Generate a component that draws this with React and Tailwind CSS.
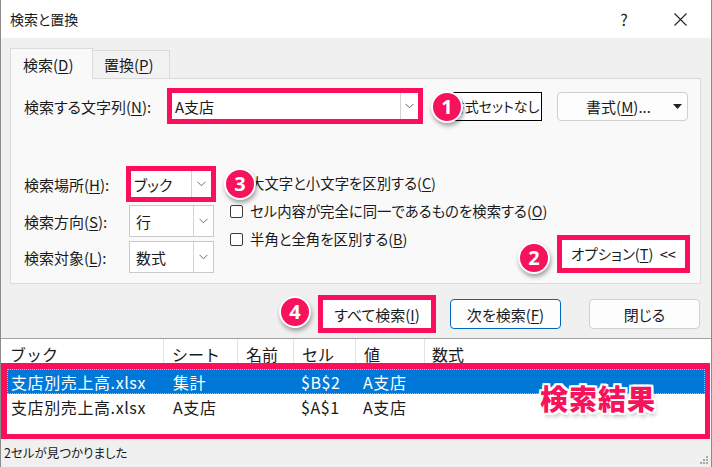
import React from 'react';

const PINK = 'border-[#fb0f5b]';

function Chevron() {
  return (
    <svg width="9" height="6" viewBox="0 0 9 6" fill="none">
      <path d="M0.5 0.8 L4.5 4.8 L8.5 0.8" stroke="#6b6b6b" strokeWidth="1" />
    </svg>
  );
}

function Badge({ n, className }) {
  return (
    <div
      className={`absolute w-[32px] h-[32px] rounded-full bg-[#f7135c] border-2 border-white shadow-[1px_3px_4px_rgba(0,0,0,0.35)] flex items-center justify-center text-white text-[20px] font-bold leading-none font-['Noto_Sans',sans-serif] ${className}`}
    >
      {n}
    </div>
  );
}

function Key({ children }) {
  return <span className="underline underline-offset-2">{children}</span>;
}

function Select({ value }) {
  return (
    <div className="ml-[3px] w-[85px] h-[32px] bg-white border border-[#c9c9c9] flex items-center">
      <span className="flex-1 pl-[6px] text-[15px]">{value}</span>
      <div className="w-[20px] h-full border-l border-[#d4d4d4] flex items-center justify-center">
        <Chevron />
      </div>
    </div>
  );
}

function Checkbox({ children }) {
  return (
    <div className="h-[28px] flex items-center whitespace-nowrap">
      <div className="w-[13px] h-[13px] shrink-0 rounded-[2px] border border-[#3b3b3b] bg-white" />
      <span className="ml-[7px] text-[14.4px]">{children}</span>
    </div>
  );
}

const cols = [163, 74, 56, 62, 69];

export default function App() {
  return (
    <div className="relative w-[712px] h-[467px] overflow-hidden bg-[#f0f0f0] flex flex-col text-[#1a1a1a] leading-none font-['Noto_Sans_CJK_JP',sans-serif] [font-feature-settings:'palt'] border-l border-r border-[#8c8c8c]">
      {/* title bar */}
      <div className="h-[38px] bg-white flex items-center shrink-0">
        <span className="pl-[9px] text-[14px]">検索と置換</span>
        <div className="flex-1" />
        <span className="w-[20px] text-center text-[16px]">?</span>
        <svg className="ml-[40px] mr-[24px]" width="13" height="13" viewBox="0 0 13 13">
          <path d="M0.5 0.5 L12.5 12.5 M12.5 0.5 L0.5 12.5" stroke="#222" strokeWidth="1.1" />
        </svg>
      </div>

      {/* tabs */}
      <div className="pt-[10px] pl-[9px] flex items-end shrink-0">
        <div className="relative z-10 -mb-px w-[83px] h-[31px] bg-[#f9f9f9] border border-b-0 border-[#dadada] flex items-center pl-[12px] text-[15px]">
          検索(<Key>D</Key>)
        </div>
        <div className="w-[77px] h-[28px] bg-[#f2f2f2] border border-l-0 border-b-0 border-[#dadada] flex items-center pl-[11px] text-[15px]">
          置換(<Key>P</Key>)
        </div>
      </div>

      {/* panel */}
      <div className="ml-[9px] w-[691px] h-[206px] bg-[#f9f9f9] border border-[#dadada] shrink-0 flex flex-col">
        <div className="mt-[9px] h-[36px] flex items-center">
          <span className="w-[156px] pl-[13px] text-[15px]">
            検索する文字列(<Key>N</Key>):
          </span>
          <div className={`w-[256px] h-[36px] border-[5px] ${PINK} bg-white flex items-center`}>
            <span className="flex-1 pl-[3px] text-[15px]">A支店</span>
            <div className="w-[18px] h-full border-l border-[#d4d4d4] flex items-center justify-center">
              <Chevron />
            </div>
          </div>
          <div className="ml-[25px] w-[94px] h-[29px] bg-white border border-black flex items-center justify-center text-[14px] whitespace-nowrap">
            書式セットなし
          </div>
          <div className="ml-[15px] w-[131px] h-[29px] rounded-[4px] bg-[#fdfdfd] border border-[#cfcfcf] flex items-center text-[15px]">
            <span className="flex-1 text-center pl-[6px]">
              書式(<Key>M</Key>)...
            </span>
            <svg className="mr-[5px]" width="9" height="5" viewBox="0 0 9 5">
              <path d="M0 0 L9 0 L4.5 5 Z" fill="#222" />
            </svg>
          </div>
        </div>

        <div className="mt-[42px] flex">
          <div className="flex flex-col shrink-0">
            <div className="h-[36px] flex items-center">
              <span className="w-[115px] pl-[13px] text-[15px]">
                検索場所(<Key>H</Key>):
              </span>
              <div className={`w-[90px] h-[36px] border-[5px] ${PINK} bg-white flex items-center`}>
                <span className="flex-1 pl-[3px] text-[15px]">ブック</span>
                <div className="w-[20px] h-full border-l border-[#d4d4d4] flex items-center justify-center">
                  <Chevron />
                </div>
              </div>
            </div>
            <div className="mt-[3px] h-[32px] flex items-center">
              <span className="w-[115px] pl-[13px] text-[15px]">
                検索方向(<Key>S</Key>):
              </span>
              <Select value="行" />
            </div>
            <div className="mt-[4px] h-[32px] flex items-center">
              <span className="w-[115px] pl-[13px] text-[15px]">
                検索対象(<Key>L</Key>):
              </span>
              <Select value="数式" />
            </div>
          </div>

          <div className="ml-[14px] pt-[3px] flex flex-col shrink-0">
            <Checkbox>
              大文字と小文字を区別する(<Key>C</Key>)
            </Checkbox>
            <Checkbox>
              セル内容が完全に同一であるものを検索する(<Key>O</Key>)
            </Checkbox>
            <Checkbox>
              半角と全角を区別する(<Key>B</Key>)
            </Checkbox>
          </div>

          <div className="flex-1" />
          <div className={`self-end shrink-0 mr-[10px] w-[133px] h-[38px] border-[5px] ${PINK} bg-white flex items-center justify-center text-[14.5px] whitespace-nowrap`}>
            オプション(<Key>T</Key>)&nbsp;&nbsp;&lt;&lt;
          </div>
        </div>
      </div>

      {/* action buttons */}
      <div className="mt-[11px] h-[38px] flex items-center shrink-0">
        <div className={`ml-[317px] w-[118px] h-[38px] border-[5px] ${PINK} bg-white flex items-center justify-center text-[15px]`}>
          すべて検索(<Key>I</Key>)
        </div>
        <div className="ml-[14px] w-[111px] h-[30px] rounded-[4px] bg-[#fdfdfd] border border-[#0067c0] flex items-center justify-center text-[15px]">
          次を検索(<Key>F</Key>)
        </div>
        <div className="ml-[28px] w-[111px] h-[30px] rounded-[4px] bg-[#fdfdfd] border border-[#d0d0d0] flex items-center justify-center text-[15px]">
          閉じる
        </div>
      </div>

      {/* results list */}
      <div className="mt-[5px] bg-white border-t border-[#a0a0a0] flex flex-col shrink-0 [font-feature-settings:normal] text-[16px]">
        <div className="h-[24px] flex items-center">
          {['ブック', 'シート', '名前', 'セル', '値'].map((h, i) => (
            <div
              key={h}
              style={{ width: cols[i] }}
              className={`h-full flex items-center pt-[5px] border-r border-[#e3e3e3] ${i === 0 ? 'pl-[9px]' : 'pl-[8px]'}`}
            >
              {h}
            </div>
          ))}
          <div className="h-full flex items-center pt-[5px] pl-[7px]">数式</div>
        </div>
        <div className={`w-[709px] h-[76px] border-[6px] border-b-[5px] border-r-[5px] ${PINK} flex flex-col tracking-[0.6px]`}>
          <div className="h-[25px] bg-[#0078d7] text-white flex items-center border border-dotted border-[#f0b65a]">
            <div style={{ width: cols[0] - 7 }} className="pl-[3px]">支店別売上高.xlsx</div>
            <div style={{ width: cols[1] }} className="pl-[9px]">集計</div>
            <div style={{ width: cols[2] }} />
            <div style={{ width: cols[3] }} className="pl-[7px]">$B$2</div>
            <div className="pl-[7px]">A支店</div>
          </div>
          <div className="h-[25px] flex items-center">
            <div style={{ width: cols[0] - 6 }} className="pl-[4px]">支店別売上高.xlsx</div>
            <div style={{ width: cols[1] }} className="pl-[9px]">A支店</div>
            <div style={{ width: cols[2] }} />
            <div style={{ width: cols[3] }} className="pl-[7px]">$A$1</div>
            <div className="pl-[7px]">A支店</div>
          </div>
        </div>
      </div>

      {/* status bar */}
      <div className="flex-1 flex items-center pl-[3px] text-[12.5px] relative">
        2セルが見つかりました
        <svg className="absolute right-[2px] bottom-[2px]" width="10" height="10" viewBox="0 0 10 10">
          {[[8, 2], [8, 5], [8, 8], [5, 5], [5, 8], [2, 8]].map(([x, y]) => (
            <rect key={`${x}-${y}`} x={x - 1} y={y - 1} width="2" height="2" fill="#a8a8a8" />
          ))}
        </svg>
      </div>

      {/* annotations */}
      <Badge n="1" className="left-[430px] top-[91px]" />
      <Badge n="3" className="left-[223px] top-[168px]" />
      <Badge n="2" className="left-[517px] top-[242px]" />
      <Badge n="4" className="left-[278px] top-[296px]" />
      <div className="absolute left-[539px] top-[384px] text-[28px] font-black text-[#f7135c] leading-none tracking-[1px] [text-shadow:2px_0_0_#fff,-2px_0_0_#fff,0_2px_0_#fff,0_-2px_0_#fff,2px_2px_0_#fff,-2px_-2px_0_#fff,2px_-2px_0_#fff,-2px_2px_0_#fff,2px_4px_4px_rgba(0,0,0,0.3)]">
        検索結果
      </div>
    </div>
  );
}
